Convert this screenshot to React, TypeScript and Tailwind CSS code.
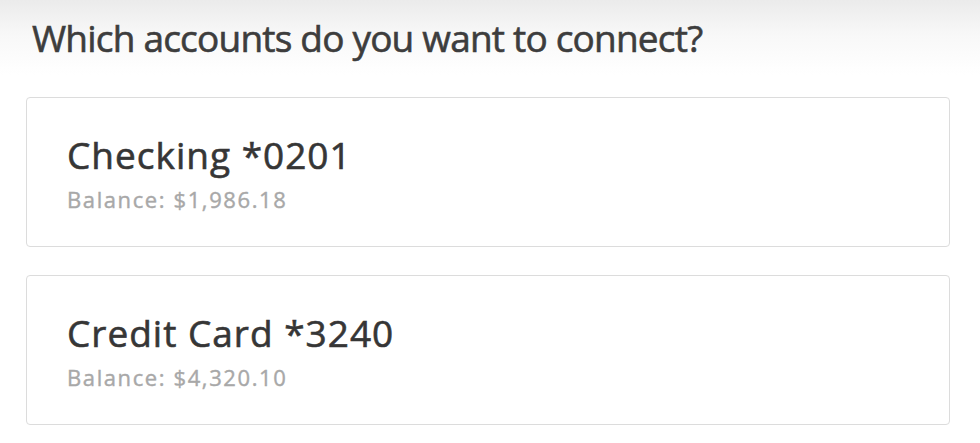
import React from 'react';

const accounts = [
  { name: 'Checking *0201', balance: '$1,986.18' },
  { name: 'Credit Card *3240', balance: '$4,320.10' },
];

export default function App() {
  return (
    <div
      className="w-[980px] h-[443px] overflow-hidden bg-[linear-gradient(to_bottom,#ebebeb_0px,#f8f8f8_35px,#ffffff_75px)]"
      style={{ fontFamily: '"Open Sans", "Noto Sans", sans-serif' }}
    >
      <div className="pt-[16px] pl-[32px]">
        <h1 className="text-[37px] leading-[44px] text-[#3d3d3d] tracking-[-0.8px] [-webkit-text-stroke:0.6px_#3d3d3d]">
          Which accounts do you want to connect?
        </h1>
      </div>

      <div className="mt-[37px] ml-[26px] w-[924px] flex flex-col gap-[28px]">
        {accounts.map((acc) => (
          <div
            key={acc.name}
            className="h-[150px] rounded-[4px] border border-[#dcdcdc] bg-white pl-[40px] pt-[35px]"
          >
            <div className="text-[37px] leading-[44px] text-[#363636] tracking-[1px] [-webkit-text-stroke:0.6px_#363636]">
              {acc.name}
            </div>
            <div className="text-[22px] leading-[26px] text-[#a8a8a8] tracking-[1.6px] mt-[9px] [-webkit-text-stroke:0.4px_#a8a8a8]">
              Balance: {acc.balance}
            </div>
          </div>
        ))}
      </div>
    </div>
  );
}
